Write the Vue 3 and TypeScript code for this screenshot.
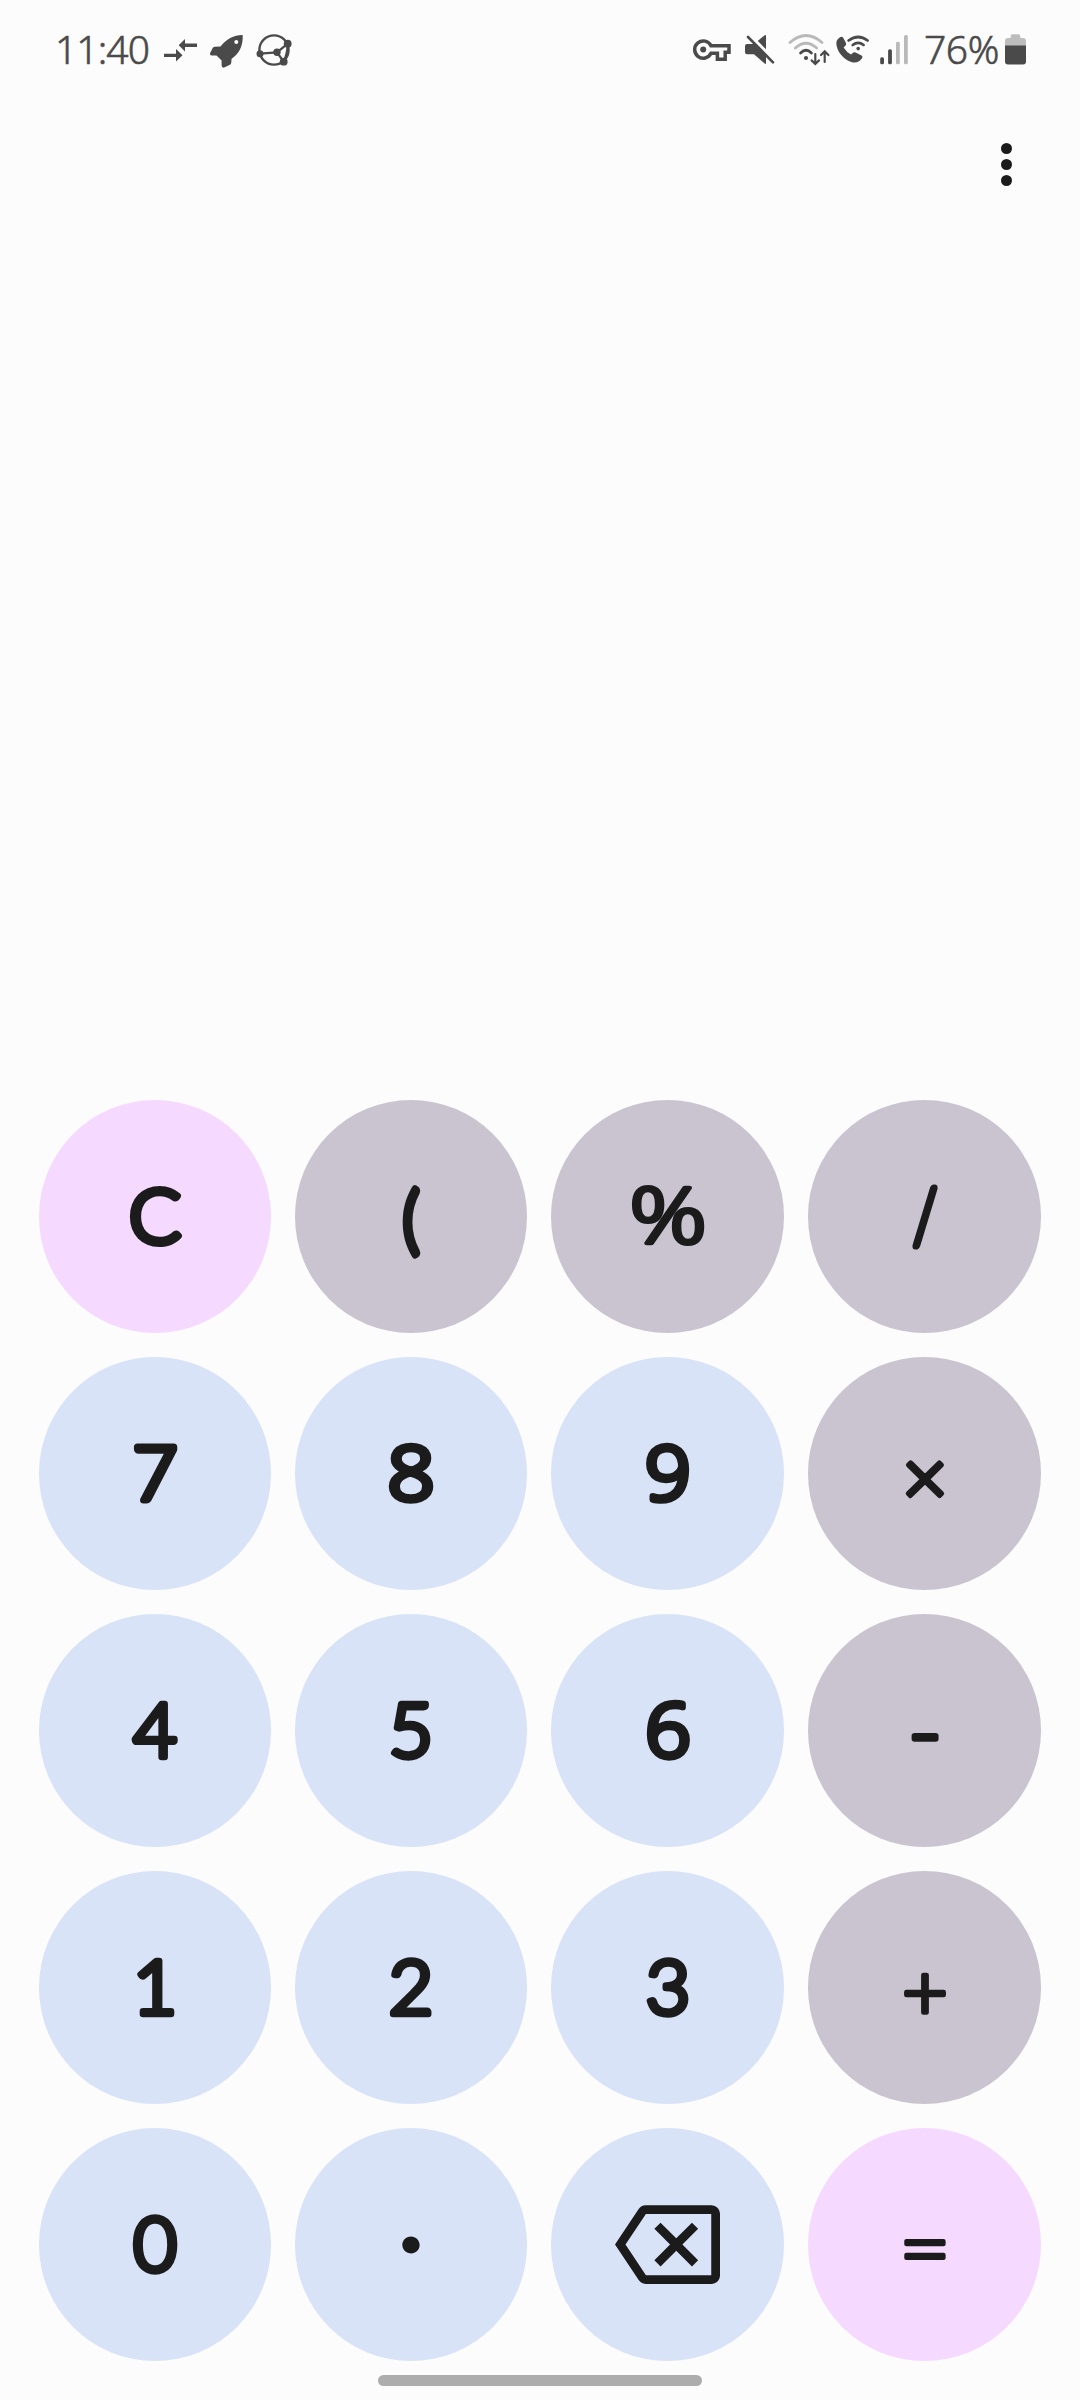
<script setup lang="ts">
type Tone = 'accent' | 'operator' | 'digit'

interface Key {
  label: string
  tone: Tone
  y?: number
  size?: number
  stroke?: number
  stretch?: number
  open?: boolean
  icon?: boolean
}

const keys: Key[] = [
  { label: 'C', tone: 'accent', stroke: 7 },
  { label: '(', tone: 'operator', y: 145, size: 72, stroke: 8, stretch: 0.88 },
  { label: '%', tone: 'operator', size: 77, stroke: 4.2, stretch: 1.25, open: true },
  { label: '/', tone: 'operator', y: 142.5, stroke: 7.2, size: 75, stretch: 0.74 },
  { label: '7', tone: 'digit', stroke: 7 },
  { label: '8', tone: 'digit', stretch: 1.11, open: true },
  { label: '9', tone: 'digit', stretch: 1.07, open: true },
  { label: '×', tone: 'operator', y: 147.5, size: 76, stroke: 5 },
  { label: '4', tone: 'digit', stretch: 1.01 },
  { label: '5', tone: 'digit' },
  { label: '6', tone: 'digit', stretch: 1.07, open: true },
  { label: '-', tone: 'operator', y: 147, size: 80, stroke: 5.5, stretch: 1.12 },
  { label: '1', tone: 'digit' },
  { label: '2', tone: 'digit' },
  { label: '3', tone: 'digit' },
  { label: '+', tone: 'operator', y: 147.5, size: 77, stroke: 4.6 },
  { label: '0', tone: 'digit', stretch: 1.01 },
  { label: '.', tone: 'digit', y: 120, stroke: 10 },
  { label: 'Backspace', tone: 'digit', icon: true },
  { label: '=', tone: 'accent', y: 150.5, size: 86, stroke: 4.2, stretch: 1.04 },
]

const place = (k: Key): string =>
  `translate(116 ${k.y ?? 143}) scale(${k.stretch ?? 1.03} 1)`
</script>

<template>
  <main class="screen">
    <header class="status">
      <div class="group">
        <span class="clock">11:40</span>
        <svg width="46" height="60" viewBox="158 20 46 60">
          <g fill="#4a4a4a">
            <path d="M164 53.7H176V49L182.5 55.2L176 61.5V56.9H164z" />
            <path d="M197 43.6H185V39L178.700 45.300L185 51.500V46.900H197z" />
          </g>
        </svg>
        <svg width="46" height="60" viewBox="204 20 46 60">
          <path fill="#4a4a4a" d="M242.700 34.900C234 34.800 226 39 220.500 46.600L214.500 46.700Q213.300 46.900 212.700 48L210 53.300Q209.700 55.500 211.600 55.600L216.500 55.500L221.600 60.500V65.500Q221.800 68 224.200 67.600L230 64.800Q231 64.200 231.200 63L231.600 58.800C239 53.500 243.200 46 242.700 34.900z" />
          <circle cx="236.300" cy="42" r="2" fill="#fcfcfc" />
        </svg>
        <svg width="50" height="60" viewBox="250 20 50 60">
          <g fill="none" stroke="#4a4a4a" stroke-width="2.300">
            <circle cx="274" cy="50" r="14.600" />
            <path d="M260 53.700L277 52.300L287.700 43.700M277 52.300L283.700 61.700M287.700 43.700Q287.500 54 283.700 61.700" />
          </g>
          <g fill="#4a4a4a">
            <circle cx="260" cy="53.700" r="3.500" />
            <circle cx="287.700" cy="43.700" r="3.900" />
            <circle cx="283.700" cy="61.700" r="3.900" />
            <circle cx="277" cy="52.300" r="3.700" />
          </g>
        </svg>
      </div>
      <div class="group">
        <svg width="48" height="60" viewBox="688 20 48 60">
          <path fill="none" stroke="#4a4a4a" stroke-width="3.500" d="M711 45.800H729V52.200H725.200V59.300H717.400V53.300H711A8.600 8.600 0 1 1 711 45.800z" />
          <circle cx="703.200" cy="49.600" r="3" fill="#4a4a4a" />
        </svg>
        <svg width="48" height="60" viewBox="736 20 48 60">
          <path fill="#4a4a4a" d="M747 44H754L765 35Q766 34.500 766 36V63Q766 64.500 765 63.800L754 54.300H747Q745 54.300 745 52.300V46Q745 44 747 44z" />
          <path d="M749.500 35L775 61" stroke="#fcfcfc" stroke-width="3.400" />
          <path d="M748 37L773 62.300" stroke="#4a4a4a" stroke-width="2.600" stroke-linecap="round" />
        </svg>
        <svg width="48" height="60" viewBox="784 20 48 60">
          <g fill="none" stroke-linecap="round" stroke-width="2.800">
            <path stroke="#b9b9b9" d="M790 42.500Q806 28.500 822 42.500" />
            <path stroke="#b9b9b9" d="M795.300 48Q806 38.500 816.700 48" />
            <path stroke="#4a4a4a" d="M800.600 53Q806 47.700 811.400 53" />
            <path stroke="#4a4a4a" stroke-width="2.200" d="M815.300 54V63M811.600 60.400L815.300 64L819 60.400M824.700 62V52M821 55L824.700 51.400L828.400 55" />
          </g>
          <circle cx="806" cy="58" r="2.100" fill="#4a4a4a" />
        </svg>
        <svg width="44" height="60" viewBox="832 20 44 60">
          <path fill="#4a4a4a" d="M840 37.300Q842 35.800 843.200 37.800L846 43Q846.600 44.600 845.400 45.800L843.600 47.400Q846.500 52 851 54.600L853 52.800Q854.200 51.900 855.600 52.600L861.500 55.500Q863.400 56.600 862 58.300Q858 63.800 852 62.300C843 59.500 836.500 51 836.300 43Q836.500 39.500 840 37.300z" />
          <g fill="none" stroke="#4a4a4a" stroke-width="2.700" stroke-linecap="round">
            <path d="M848.600 40.500Q858.200 33.500 867.600 40.500" />
            <path d="M852.700 45Q858.200 40.800 863.600 45" />
          </g>
          <circle cx="858.200" cy="48.600" r="1.800" fill="#4a4a4a" />
        </svg>
        <svg width="42" height="60" viewBox="876 20 42 60">
          <g fill="#4a4a4a">
            <rect x="880.200" y="57.300" width="3.800" height="6.900" rx="1.500" />
            <rect x="888.100" y="49.300" width="3.800" height="14.900" rx="1.500" />
          </g>
          <g fill="#b9b9b9">
            <rect x="896" y="41.700" width="3.800" height="22.500" rx="1.500" />
            <rect x="904" y="35" width="3.800" height="29.200" rx="1.500" />
          </g>
        </svg>
        <span class="percent">76%</span>
        <svg width="30" height="60" viewBox="1002 20 30 60">
          <path fill="#bdbdbd" d="M1005 46V41Q1005 38 1008 38H1010.700V36Q1010.700 34.300 1012.500 34.300H1018.500Q1020.300 34.300 1020.300 36V38H1023Q1026 38 1026 41V46z" />
          <path fill="#4a4a4a" d="M1005 45.500H1026V61.500Q1026 64.500 1023 64.500H1008Q1005 64.500 1005 61.500z" />
        </svg>
      </div>
    </header>

    <div class="toolbar">
      <button class="more" aria-label="More options">
        <i></i><i></i><i></i>
      </button>
    </div>

    <section class="display"></section>

    <section class="pad">
      <button v-for="k in keys" :key="k.label" class="key" :class="k.tone" :aria-label="k.label">
        <svg v-if="k.icon" class="erase" viewBox="0 0 24 24">
          <path d="M22 3H7c-.69 0-1.230.35-1.590.88L0 12l5.410 8.110c.36.53.9.89 1.590.89h15c1.100 0 2-.9 2-2V5c0-1.100-.9-2-2-2zm0 16H7.070L2.400 12l4.660-7H22v14zm-11.590-2L14 13.410 17.590 17 19 15.590 15.410 12 19 8.410 17.590 7 14 10.590 10.410 7 9 8.410 12.590 12 9 15.590z" />
        </svg>
        <svg v-else class="face" viewBox="0 0 232 232">
          <text :class="{ open: k.open }" :transform="place(k)" text-anchor="middle" :font-size="k.size ?? 74.5" :stroke-width="k.stroke ?? 6.4">{{ k.label }}</text>
        </svg>
      </button>
    </section>

    <footer class="nav"><span class="handle"></span></footer>
  </main>
</template>

<style>
html,
body {
  margin: 0;
  background: #fcfcfc;
}
</style>

<style scoped>
.screen {
  display: flex;
  flex-direction: column;
  width: 1080px;
  height: 2400px;
  background: #fcfcfc;
  overflow: hidden;
  font-family: "Noto Sans", sans-serif;
}

.status {
  display: flex;
  justify-content: space-between;
  height: 60px;
  padding: 20px 48px 0 55px;
}

.group {
  display: flex;
  align-items: flex-start;
}

.group svg {
  flex: none;
}

.clock,
.percent {
  height: 60px;
  line-height: 58px;
  font-size: 39px;
  font-weight: 300;
  color: #4a4a4a;
  -webkit-text-stroke: 0.6px #4a4a4a;
  white-space: nowrap;
}

.clock {
  width: 103px;
  letter-spacing: -0.9px;
}

.percent {
  width: 78px;
  margin-left: 6px;
  letter-spacing: -0.4px;
}

.toolbar {
  display: flex;
  justify-content: flex-end;
  height: 169px;
  padding-right: 50px;
}

.more {
  display: flex;
  flex-direction: column;
  align-items: center;
  justify-content: center;
  gap: 4.8px;
  width: 48px;
  height: 169px;
  padding: 0;
  border: 0;
  background: none;
}

.more i {
  width: 11px;
  height: 11px;
  border-radius: 50%;
  background: #1b1b1b;
}

.display {
  flex: 1;
}

.pad {
  display: grid;
  grid-template-columns: 232px 232px 233px 233px;
  grid-auto-rows: 232.5px;
  gap: 24.5px 24px;
  padding: 0 39px;
}

.key {
  display: flex;
  align-items: center;
  justify-content: center;
  padding: 0;
  border: 0;
  border-radius: 50%;
}

.digit {
  background: #d8e3f8;
}

.operator {
  background: #cac4d0;
}

.accent {
  background: #f6d9ff;
}

.face {
  width: 232px;
  height: 232px;
}

.face text {
  font-family: Lato, sans-serif;
  font-weight: 300;
  fill: #1b1b1b;
  stroke: #1b1b1b;
  stroke-linejoin: round;
}

.face text.open {
  font-family: "Open Sans", sans-serif;
}

.erase {
  width: 105px;
  height: 105px;
  fill: #1b1b1b;
}

.nav {
  display: flex;
  justify-content: center;
  height: 25px;
  margin-top: 14.500px;
}

.handle {
  width: 324px;
  height: 11px;
  border-radius: 6px;
  background: #adadad;
}
</style>
